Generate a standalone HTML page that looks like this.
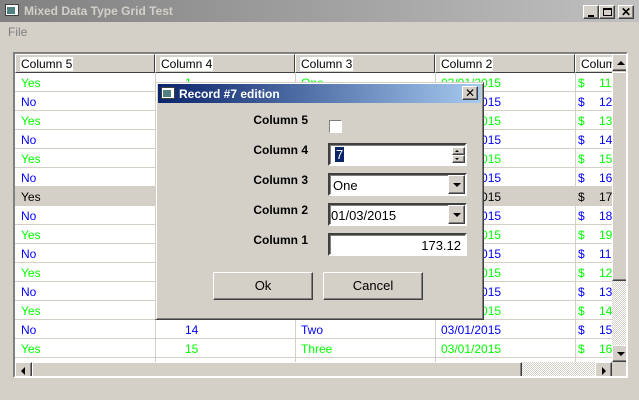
<!DOCTYPE html><html><head><style>
*{margin:0;padding:0;box-sizing:border-box}
body{width:639px;height:400px;background:#d4d0c8;font:12px "Liberation Sans",sans-serif;position:relative;overflow:hidden}
.a{position:absolute}
.tb{left:0;top:0;width:639px;height:22px;background:linear-gradient(90deg,#808080,#c0c0c0);color:#d4d0c8;font-weight:bold;font-size:12px}
.btn{background:#d4d0c8;border:1px solid;border-color:#fff #404040 #404040 #fff;box-shadow:inset -1px -1px #808080}
.grid{left:13px;top:52px;width:615px;height:326px;background:#fff;border:2px solid;border-color:#808080 #fff #fff #808080;overflow:hidden}
.hd{top:0;height:19px;background:#d4d0c8;border:1px solid;border-color:#fff #404040 #404040 #fff}
.hd span{background:#fff;position:absolute;left:4px;top:2px;padding:0 1px}
.r{left:0;width:700px;height:19px;border-bottom:1px solid #d4d0c8}
.r span{position:absolute;top:3px}
.r i{position:absolute;top:0;width:1px;height:19px;background:#d4d0c8}
.g{color:#00ff00}.b{color:#0000ff}.s{background:#d4d0c8;color:#000}
.lab{font-weight:bold;color:#000;width:120px;text-align:right;left:32px}
.in{background:#fff;border:2px solid;border-color:#404040 #fff #fff #404040;box-shadow:inset 1px 1px #808080}
.arr{width:0;height:0;border-left:4px solid transparent;border-right:4px solid transparent}
</style></head><body>
<div class="a tb"><div class="a" style="left:5px;top:4px;width:14px;height:12px;background:#fff;border:1px solid #404040"><div class="a" style="left:1px;top:2px;width:8px;height:7px;background:#508080"></div></div><span class="a" style="left:24px;top:4px">Mixed Data Type Grid Test</span>
<div class="a btn" style="left:583px;top:5px;width:16px;height:14px"><div class="a" style="left:4px;top:9px;width:6px;height:2px;background:#000"></div></div>
<div class="a btn" style="left:599px;top:5px;width:16px;height:14px"><div class="a" style="left:3px;top:2px;width:9px;height:8px;border:1px solid #000;border-top-width:2px"></div></div>
<div class="a btn" style="left:618px;top:5px;width:16px;height:14px;color:#000;font-size:12px;text-align:center;line-height:12px">✕</div></div>
<div class="a" style="left:8px;top:25px;color:#808080">File</div>
<div class="a grid">
<div class="a hd" style="left:0;width:140px"><span>Column 5</span></div>
<div class="a hd" style="left:140px;width:140px"><span>Column 4</span></div>
<div class="a hd" style="left:280px;width:140px"><span>Column 3</span></div>
<div class="a hd" style="left:420px;width:140px"><span>Column 2</span></div>
<div class="a hd" style="left:560px;width:140px"><span>Column 1</span></div>
<div class="a" style="top:19px;left:0;width:700px">
<div class="a r g" style="top:0"><span style="left:6px">Yes</span><i style="left:140px"></i><span style="left:170px">1</span><i style="left:280px"></i><span style="left:286px">One</span><i style="left:420px"></i><span style="left:426px">03/01/2015</span><i style="left:560px"></i><span style="left:563px">$</span><span style="left:584px">113.12</span></div>
<div class="a r b" style="top:19px"><span style="left:6px">No</span><i style="left:140px"></i><span style="left:170px">2</span><i style="left:280px"></i><span style="left:286px">Two</span><i style="left:420px"></i><span style="left:426px">03/01/2015</span><i style="left:560px"></i><span style="left:563px">$</span><span style="left:584px">123.12</span></div>
<div class="a r g" style="top:38px"><span style="left:6px">Yes</span><i style="left:140px"></i><span style="left:170px">3</span><i style="left:280px"></i><span style="left:286px">Three</span><i style="left:420px"></i><span style="left:426px">03/01/2015</span><i style="left:560px"></i><span style="left:563px">$</span><span style="left:584px">133.12</span></div>
<div class="a r b" style="top:57px"><span style="left:6px">No</span><i style="left:140px"></i><span style="left:170px">4</span><i style="left:280px"></i><span style="left:286px">One</span><i style="left:420px"></i><span style="left:426px">03/01/2015</span><i style="left:560px"></i><span style="left:563px">$</span><span style="left:584px">143.12</span></div>
<div class="a r g" style="top:76px"><span style="left:6px">Yes</span><i style="left:140px"></i><span style="left:170px">5</span><i style="left:280px"></i><span style="left:286px">Two</span><i style="left:420px"></i><span style="left:426px">03/01/2015</span><i style="left:560px"></i><span style="left:563px">$</span><span style="left:584px">153.12</span></div>
<div class="a r b" style="top:95px"><span style="left:6px">No</span><i style="left:140px"></i><span style="left:170px">6</span><i style="left:280px"></i><span style="left:286px">Three</span><i style="left:420px"></i><span style="left:426px">03/01/2015</span><i style="left:560px"></i><span style="left:563px">$</span><span style="left:584px">163.12</span></div>
<div class="a r s" style="top:114px"><span style="left:6px">Yes</span><span style="left:170px">7</span><span style="left:286px">One</span><span style="left:426px">03/01/2015</span><span style="left:563px">$</span><span style="left:584px">173.12</span></div>
<div class="a r b" style="top:133px"><span style="left:6px">No</span><i style="left:140px"></i><span style="left:170px">8</span><i style="left:280px"></i><span style="left:286px">Two</span><i style="left:420px"></i><span style="left:426px">03/01/2015</span><i style="left:560px"></i><span style="left:563px">$</span><span style="left:584px">183.12</span></div>
<div class="a r g" style="top:152px"><span style="left:6px">Yes</span><i style="left:140px"></i><span style="left:170px">9</span><i style="left:280px"></i><span style="left:286px">Three</span><i style="left:420px"></i><span style="left:426px">03/01/2015</span><i style="left:560px"></i><span style="left:563px">$</span><span style="left:584px">193.12</span></div>
<div class="a r b" style="top:171px"><span style="left:6px">No</span><i style="left:140px"></i><span style="left:170px">10</span><i style="left:280px"></i><span style="left:286px">One</span><i style="left:420px"></i><span style="left:426px">03/01/2015</span><i style="left:560px"></i><span style="left:563px">$</span><span style="left:584px">113.12</span></div>
<div class="a r g" style="top:190px"><span style="left:6px">Yes</span><i style="left:140px"></i><span style="left:170px">11</span><i style="left:280px"></i><span style="left:286px">Two</span><i style="left:420px"></i><span style="left:426px">03/01/2015</span><i style="left:560px"></i><span style="left:563px">$</span><span style="left:584px">123.12</span></div>
<div class="a r b" style="top:209px"><span style="left:6px">No</span><i style="left:140px"></i><span style="left:170px">12</span><i style="left:280px"></i><span style="left:286px">Three</span><i style="left:420px"></i><span style="left:426px">03/01/2015</span><i style="left:560px"></i><span style="left:563px">$</span><span style="left:584px">133.12</span></div>
<div class="a r g" style="top:228px"><span style="left:6px">Yes</span><i style="left:140px"></i><span style="left:170px">13</span><i style="left:280px"></i><span style="left:286px">One</span><i style="left:420px"></i><span style="left:426px">03/01/2015</span><i style="left:560px"></i><span style="left:563px">$</span><span style="left:584px">143.12</span></div>
<div class="a r b" style="top:247px"><span style="left:6px">No</span><i style="left:140px"></i><span style="left:170px">14</span><i style="left:280px"></i><span style="left:286px">Two</span><i style="left:420px"></i><span style="left:426px">03/01/2015</span><i style="left:560px"></i><span style="left:563px">$</span><span style="left:584px">153.12</span></div>
<div class="a r g" style="top:266px"><span style="left:6px">Yes</span><i style="left:140px"></i><span style="left:170px">15</span><i style="left:280px"></i><span style="left:286px">Three</span><i style="left:420px"></i><span style="left:426px">03/01/2015</span><i style="left:560px"></i><span style="left:563px">$</span><span style="left:584px">163.12</span></div>
<div class="a r b" style="top:285px"><span style="left:6px">No</span><i style="left:140px"></i><span style="left:170px">16</span><i style="left:280px"></i><span style="left:286px">One</span><i style="left:420px"></i><span style="left:426px">03/01/2015</span><i style="left:560px"></i><span style="left:563px">$</span><span style="left:584px">173.12</span></div>
</div>
<div class="a" style="left:597px;top:0;width:18px;height:308px;background:#d4d0c8"></div>
<div class="a btn" style="left:597px;top:0;width:17px;height:17px"><div class="a arr" style="left:4px;top:6px;border-bottom:4px solid #000"></div></div>
<div class="a btn" style="left:597px;top:18px;width:17px;height:209px"></div>
<div class="a" style="left:597px;top:227px;width:17px;height:64px;background:repeating-conic-gradient(#fff 0 25%,#d4d0c8 0 50%) 0 0/2px 2px"></div>
<div class="a btn" style="left:597px;top:291px;width:17px;height:17px"><div class="a arr" style="left:4px;top:6px;border-top:4px solid #000"></div></div>
<div class="a" style="left:0;top:308px;width:615px;height:18px;background:#d4d0c8"></div>
<div class="a btn" style="left:0;top:308px;width:17px;height:16px"><div class="a" style="left:5px;top:4px;border-top:4px solid transparent;border-bottom:4px solid transparent;border-right:4px solid #000"></div></div>
<div class="a btn" style="left:17px;top:308px;width:490px;height:16px"></div>
<div class="a" style="left:507px;top:308px;width:73px;height:16px;background:repeating-conic-gradient(#fff 0 25%,#d4d0c8 0 50%) 0 0/2px 2px"></div>
<div class="a btn" style="left:580px;top:308px;width:17px;height:16px"><div class="a" style="left:6px;top:4px;border-top:4px solid transparent;border-bottom:4px solid transparent;border-left:4px solid #000"></div></div>
</div>
<div class="a" style="left:155px;top:82px;width:329px;height:238px;background:#d4d0c8;border:1px solid;border-color:#d4d0c8 #404040 #404040 #d4d0c8;box-shadow:inset 1px 1px #fff,inset -1px -1px #808080">
<div class="a" style="left:2px;top:1px;width:323px;height:19px;background:linear-gradient(90deg,#0a246a,#a6caf0);color:#fff;font-weight:bold">
<div class="a" style="left:3px;top:3px;width:14px;height:12px;background:#fff;border:1px solid #404040"><div class="a" style="left:1px;top:2px;width:8px;height:7px;background:#508080"></div></div>
<span class="a" style="left:21px;top:3px">Record #7 edition</span>
<div class="a btn" style="left:304px;top:2px;width:16px;height:14px;color:#000;text-align:center;line-height:12px;font-weight:normal">✕</div></div>
<div class="a lab" style="top:30px">Column 5</div>
<div class="a" style="left:173px;top:37px;width:13px;height:13px;background:#fff;border:1px solid;border-color:#808080 #fff #fff #808080"></div>
<div class="a lab" style="top:60px">Column 4</div>
<div class="a in" style="left:172px;top:60px;width:139px;height:23px"><span class="a" style="left:5px;top:2px;background:#0a246a;color:#fff;font-size:13px;padding:0 1px">7</span>
<div class="a btn" style="left:122px;top:2px;width:13px;height:8px"><div class="a arr" style="left:2px;top:2px;border-left-width:2px;border-right-width:2px;border-bottom:2px solid #000"></div></div>
<div class="a btn" style="left:122px;top:10px;width:13px;height:8px"><div class="a arr" style="left:2px;top:2px;border-left-width:2px;border-right-width:2px;border-top:2px solid #000"></div></div></div>
<div class="a lab" style="top:90px">Column 3</div>
<div class="a in" style="left:172px;top:90px;width:139px;height:23px"><span class="a" style="left:3px;top:3px;font-size:13px">One</span><div class="a btn" style="left:118px;top:0;width:17px;height:19px"><div class="a arr" style="left:4px;top:7px;border-top:4px solid #000"></div></div></div>
<div class="a lab" style="top:120px">Column 2</div>
<div class="a in" style="left:172px;top:120px;width:139px;height:23px"><span class="a" style="left:1px;top:3px;font-size:13px">01/03/2015</span><div class="a btn" style="left:118px;top:0;width:17px;height:19px"><div class="a arr" style="left:4px;top:7px;border-top:4px solid #000"></div></div></div>
<div class="a lab" style="top:150px">Column 1</div>
<div class="a in" style="left:172px;top:150px;width:139px;height:23px"><span class="a" style="right:4px;top:3px;font-size:13px">173.12</span></div>
<div class="a btn" style="left:57px;top:189px;width:100px;height:28px;text-align:center;line-height:25px;font-size:13px">Ok</div>
<div class="a btn" style="left:167px;top:189px;width:100px;height:28px;text-align:center;line-height:25px;font-size:13px">Cancel</div>
</div>
</body></html>
